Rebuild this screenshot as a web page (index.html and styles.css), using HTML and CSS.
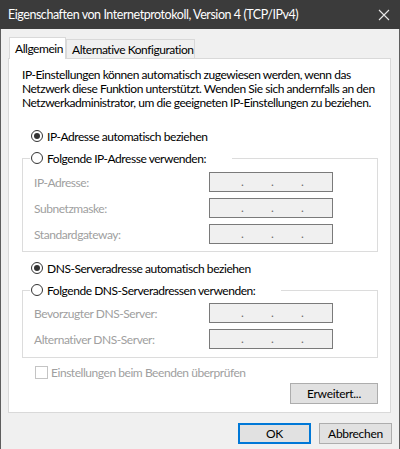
FILE: index.html
```html
<!DOCTYPE html>
<html lang="de">
<head>
<meta charset="utf-8">
<title>Eigenschaften von Internetprotokoll, Version 4 (TCP/IPv4)</title>
<link rel="stylesheet" href="styles.css">
</head>
<body>
<div class="window">
  <div class="titlebar">
    <span class="title">Eigenschaften von Internetprotokoll, Version 4 (TCP/IPv4)</span>
    <svg class="close" width="12" height="12" viewBox="0 0 12 12"><path d="M1 1L11 11M11 1L1 11" stroke="#e8e8e8" stroke-width="1.1" fill="none"/></svg>
  </div>
  <div class="body">
    <div class="tabs">
      <div class="tab active">Allgemein</div>
      <div class="tab">Alternative Konfiguration</div>
    </div>
    <div class="panel">
      <p class="intro">IP-Einstellungen können automatisch zugewiesen werden, wenn das<br>Netzwerk diese Funktion unterstützt. Wenden Sie sich andernfalls an den<br>Netzwerkadministrator, um die geeigneten IP-Einstellungen zu beziehen.</p>

      <div class="option first"><span class="radio checked"></span><span>IP-Adresse automatisch beziehen</span></div>

      <fieldset class="group g1">
        <legend class="option"><span class="radio"></span><span>Folgende IP-Adresse verwenden:</span></legend>
        <div class="rows">
          <div class="row"><span class="lbl">IP-Adresse:</span><span class="ip"><i>.</i><i>.</i><i>.</i></span></div>
          <div class="row"><span class="lbl">Subnetzmaske:</span><span class="ip"><i>.</i><i>.</i><i>.</i></span></div>
          <div class="row"><span class="lbl">Standardgateway:</span><span class="ip"><i>.</i><i>.</i><i>.</i></span></div>
        </div>
      </fieldset>

      <div class="option second"><span class="radio checked"></span><span>DNS-Serveradresse automatisch beziehen</span></div>

      <fieldset class="group g2">
        <legend class="option"><span class="radio"></span><span>Folgende DNS-Serveradressen verwenden:</span></legend>
        <div class="rows">
          <div class="row"><span class="lbl">Bevorzugter DNS-Server:</span><span class="ip"><i>.</i><i>.</i><i>.</i></span></div>
          <div class="row"><span class="lbl">Alternativer DNS-Server:</span><span class="ip"><i>.</i><i>.</i><i>.</i></span></div>
        </div>
      </fieldset>

      <div class="check"><span class="box"></span><span>Einstellungen beim Beenden überprüfen</span></div>

      <div class="adv"><button class="btn">Erweitert...</button></div>
    </div>
    <div class="footer">
      <button class="btn default">OK</button>
      <button class="btn">Abbrechen</button>
    </div>
  </div>
</div>
</body>
</html>
```

FILE: styles.css
```css
* { box-sizing: border-box; }
html, body { margin: 0; padding: 0; }
body {
  width: 400px;
  height: 449px;
  overflow: hidden;
  font-family: Lato, "Noto Sans", sans-serif;
  font-size: 12px;
  letter-spacing: -0.45px;
  color: #000;
  background: #f0f0f0;
}
.window {
  width: 400px;
  height: 449px;
  background: #f0f0f0;
  border-left: 1px solid #5e5e5e;
  border-right: 1px solid #5e5e5e;
  display: flex;
  flex-direction: column;
}
.titlebar {
  height: 29px;
  background: #3b3b3b;
  color: #fff;
  display: flex;
  align-items: center;
  padding-left: 8px;
  padding-right: 10px;
  margin: 0 -1px;
}
.title { flex: 1; font-size: 12.5px; letter-spacing: -0.45px; white-space: nowrap; }
.close { display: block; }
.body {
  flex: 1;
  padding: 8px 7px 0 7px;
  display: flex;
  flex-direction: column;
}
.tabs {
  display: flex;
  align-items: flex-end;
  height: 21px;
  padding-left: 1px;
  position: relative;
  z-index: 1;
}
.tab {
  height: 19px;
  border: 1px solid #d9d9d9;
  border-bottom: none;
  background: #f0f0f0;
  padding: 0 5px;
  display: flex;
  align-items: center;
  white-space: nowrap;
}
.tab.active {
  height: 22px;
  width: 57px;
  background: #fff;
  margin-bottom: -1px;
  padding: 0 5px;
}
.tab:not(.active) { width: 129px; }
.panel {
  height: 355px;
  width: 383px;
  background: #fff;
  border: 1px solid #d9d9d9;
  padding: 9px 12px 0 13px;
  display: flex;
  flex-direction: column;
}
.intro {
  margin: 0;
  line-height: 14px;
  white-space: nowrap;
}
.option {
  display: flex;
  align-items: center;
  height: 18px;
  gap: 4px;
  white-space: nowrap;
}
.option.first { margin-top: 17px; margin-left: 9px; }
.option.second { margin-top: 7px; margin-left: 9px; }
.radio {
  width: 12px;
  height: 12px;
  border: 1px solid #333;
  border-radius: 50%;
  display: flex;
  align-items: center;
  justify-content: center;
  flex: none;
  background: #fff;
}
.radio.checked::after {
  content: "";
  width: 6px;
  height: 6px;
  border-radius: 50%;
  background: #333;
}
.group {
  margin: 4px 0 0 0;
  padding: 0 0 7px 0;
  border: 1px solid #dcdcdc;
  width: 356px;
  min-width: 0;
}
.group legend {
  padding: 0 26px 0 1px;
  margin-left: 7px;
}
.g2 { padding-bottom: 8px; }
.rows {
  padding-top: 5px;
  padding-left: 11px;
  display: flex;
  flex-direction: column;
  gap: 6px;
}
.g2 .rows { padding-top: 4px; }
.row {
  display: grid;
  grid-template-columns: 175px 124px;
  align-items: center;
  height: 20px;
}
.lbl { color: #a0a0a0; white-space: nowrap; }
.ip {
  height: 20px;
  border: 1px solid #7a7a7a;
  background: #f0f0f0;
  display: flex;
  padding-left: 31px;
  line-height: 18px;
  color: #6d6d6d;
}
.ip i { font-style: normal; width: 30px; }
.check {
  display: flex;
  align-items: center;
  gap: 3px;
  height: 18px;
  margin-top: 5px;
  margin-left: 13px;
  color: #a0a0a0;
  white-space: nowrap;
}
.box {
  width: 13px;
  height: 13px;
  border: 1px solid #c4c4c4;
  background: #fff;
  flex: none;
}
.adv {
  display: flex;
  justify-content: flex-end;
  margin-top: 2px;
}
.btn {
  font-family: inherit;
  font-size: 12px;
  letter-spacing: -0.3px;
  color: #000;
  background: #e1e1e1;
  border: 1px solid #adadad;
  height: 21px;
  width: 88px;
  padding: 0;
  margin: 0;
}
.footer {
  display: flex;
  justify-content: flex-end;
  gap: 8px;
  padding-top: 10px;
}
.footer .btn { width: 73px; height: 21px; }
.btn.default { border: 2px solid #0078d7; }
```
